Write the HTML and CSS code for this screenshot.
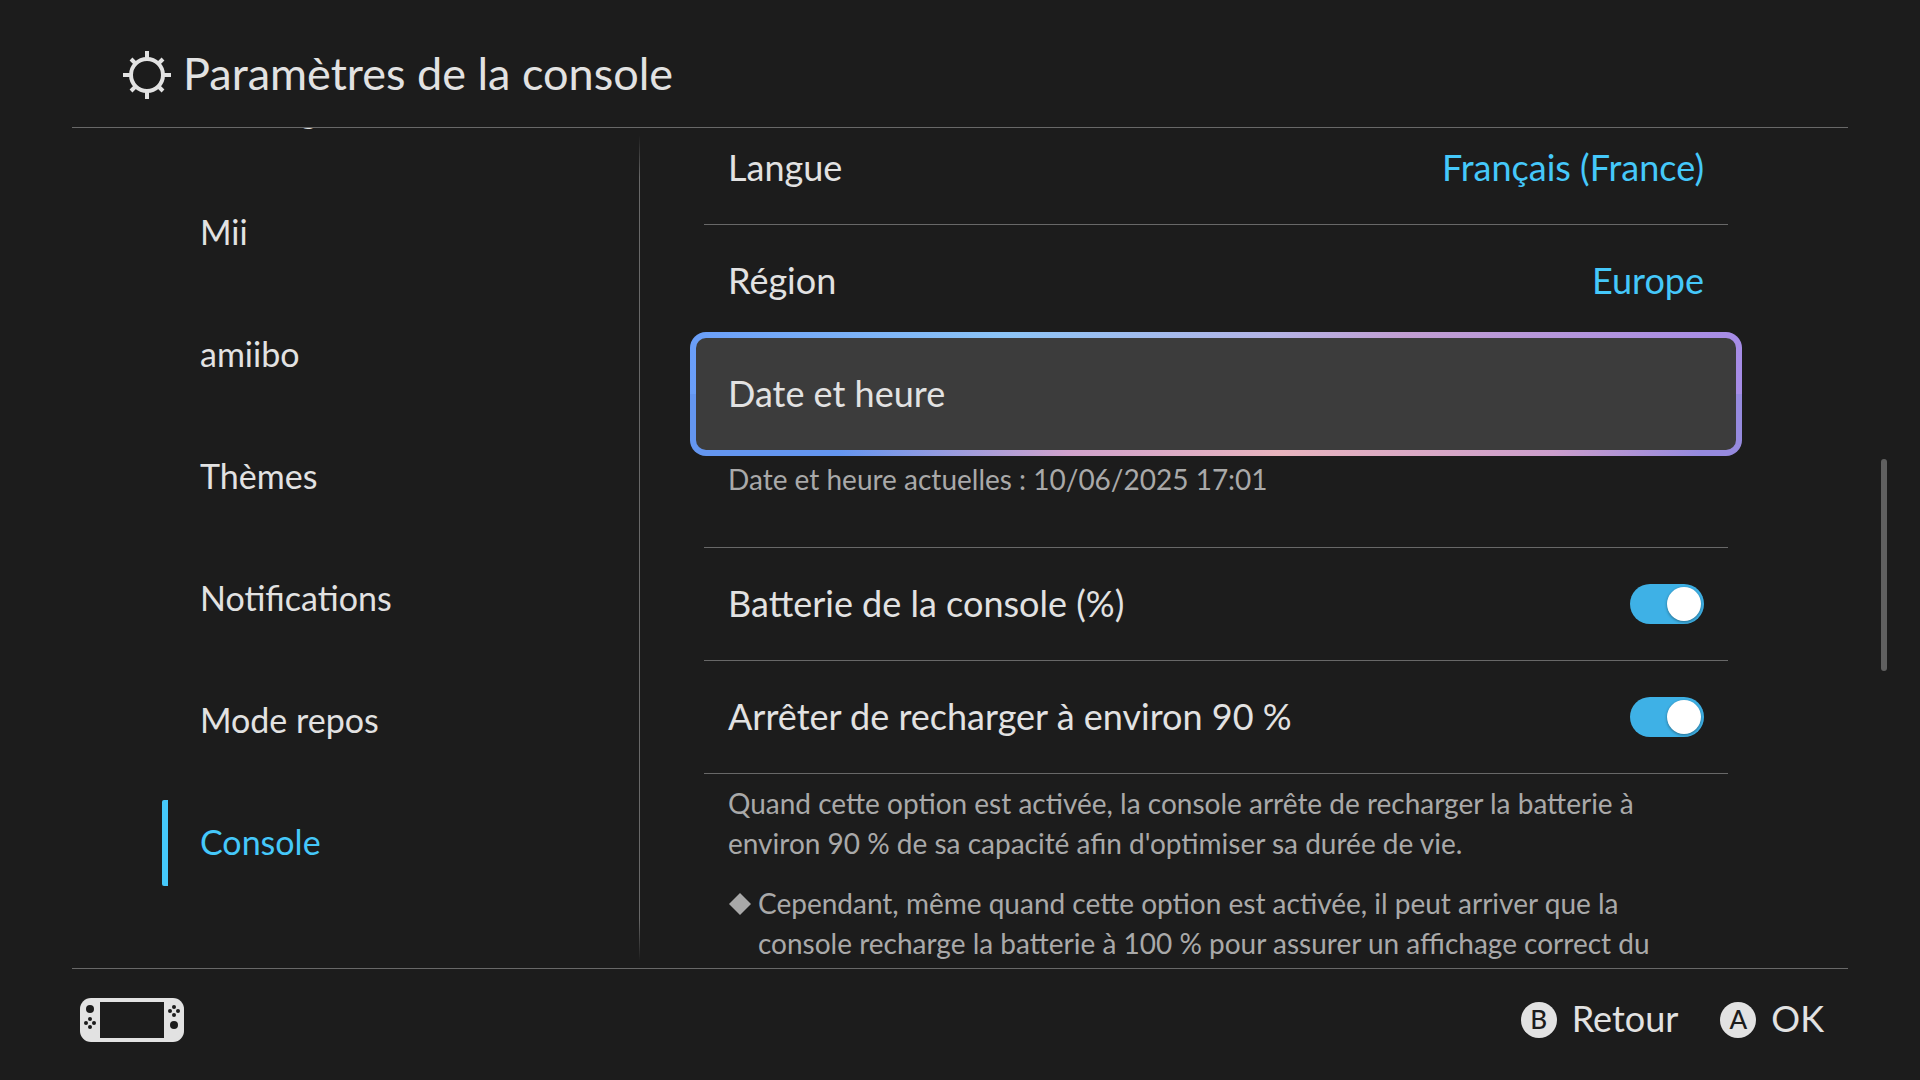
FILE: index.html
```html
<!DOCTYPE html>
<html lang="fr">
<head>
    <meta charset="UTF-8">
    <meta name="viewport" content="width=device-width, initial-scale=1.0">
    <title>Paramètres de la console</title>
    <link rel="stylesheet" href="styles.css">
</head>
<body>
    <header class="top-bar">
        <svg class="gear-icon" viewBox="0 0 48 48" aria-hidden="true">
            <circle cx="24" cy="24" r="16"/>
            <path d="M24 0v8M24 40v8M0 24h8M40 24h8M8 8l5 5M40 8l-5 5M8 40l5-5M40 40l-5-5"/>
        </svg>
        <h1>Paramètres de la console</h1>
    </header>

    <main class="settings">
        <nav class="menu">
            <a class="menu-item" href="#">Stockage</a>
            <a class="menu-item" href="#">Mii</a>
            <a class="menu-item" href="#">amiibo</a>
            <a class="menu-item" href="#">Thèmes</a>
            <a class="menu-item" href="#">Notifications</a>
            <a class="menu-item" href="#">Mode repos</a>
            <a class="menu-item active" href="#">Console</a>
        </nav>

        <section class="panel">
            <div class="panel-list">
                <button class="row">Langue <span class="value">Français (France)</span></button>
                <button class="row no-line">Région <span class="value">Europe</span></button>
                <button class="row no-line focused">Date et heure</button>
                <p class="note current-date">Date et heure actuelles : 10/06/2025 17:01</p>
                <div class="row">
                    <label for="battery">Batterie de la console (%)</label>
                    <input class="toggle" type="checkbox" id="battery" checked>
                </div>
                <div class="row">
                    <label for="charge-limit">Arrêter de recharger à environ 90 %</label>
                    <input class="toggle" type="checkbox" id="charge-limit" checked>
                </div>
                <p class="note">Quand cette option est activée, la console arrête de recharger la batterie à<br>environ 90 % de sa capacité afin d'optimiser sa durée de vie.</p>
                <p class="note warning">
                    <svg class="diamond" viewBox="0 0 20 20" aria-hidden="true"><path d="M10 0l10 10-10 10L0 10z"/></svg>
                    <span>Cependant, même quand cette option est activée, il peut arriver que la<br>console recharge la batterie à 100 % pour assurer un affichage correct du</span>
                </p>
            </div>
        </section>
        <div class="scroll-thumb"></div>
    </main>

    <footer class="bottom-bar">
        <svg class="console-icon" viewBox="0 0 104 44" aria-hidden="true">
            <rect class="shell" width="104" height="44" rx="11"/>
            <rect x="20" y="4" width="64" height="36"/>
            <circle cx="10" cy="11" r="4"/>
            <circle cx="10" cy="21" r="2"/>
            <circle cx="6" cy="25" r="2"/>
            <circle cx="14" cy="25" r="2"/>
            <circle cx="10" cy="29" r="2"/>
            <circle cx="94" cy="9" r="2"/>
            <circle cx="90" cy="13" r="2"/>
            <circle cx="98" cy="13" r="2"/>
            <circle cx="94" cy="17" r="2"/>
            <circle cx="94" cy="27" r="4"/>
        </svg>
        <div class="actions">
            <button class="action"><span class="key">B</span><span class="action-name">Retour</span></button>
            <button class="action"><span class="key">A</span><span class="action-name">OK</span></button>
        </div>
    </footer>
</body>
</html>
```

FILE: styles.css
```css
:root {
    --bg-color: #1c1c1c;
    --text-color: #e2e2e2;
    --muted-color: #a9a9a9;
    --line-color: #686868;
    --accent-color: #45c8fa;
    --toggle-color: #3eb1e6;
}

* {
    box-sizing: border-box;
    margin: 0;
    padding: 0;
}

body {
    display: flex;
    flex-direction: column;
    height: 100vh;
    padding: 0 72px;
    overflow: hidden;
    background: var(--bg-color);
    color: var(--text-color);
    font-family: Lato, "Noto Sans", sans-serif;
    font-size: 36px;
}

button {
    border: none;
    background: none;
    color: inherit;
    font: inherit;
    text-align: left;
    cursor: pointer;
}

.top-bar {
    display: flex;
    align-items: center;
    gap: 12px;
    height: 128px;
    padding: 22px 51px 0;
    border-bottom: 1px solid var(--line-color);
}

h1 {
    padding-bottom: 4px;
    font-size: 45px;
    font-weight: 400;
}

.gear-icon {
    width: 48px;
    height: 48px;
    fill: none;
    stroke: var(--text-color);
    stroke-width: 4;
}

.settings {
    position: relative;
    display: flex;
    flex: 1;
    min-height: 0;
}

.menu {
    display: flex;
    flex-direction: column;
    gap: 36px;
    width: 568px;
    overflow: hidden;
    border-right: 1px solid;
    border-image: linear-gradient(transparent 1%, var(--line-color) 6%, var(--line-color) 94%, transparent 99%) 1;
}

.menu-item {
    display: flex;
    flex-shrink: 0;
    align-items: center;
    height: 86px;
    margin-left: 90px;
    padding: 0 0 4px 32px;
    border-left: 6px solid transparent;
    color: inherit;
    font-size: 34px;
    text-decoration: none;
}

/* list is scrolled down a little */
.menu-item:first-child {
    margin-top: -60px;
}

.menu-item.active {
    border-radius: 2px;
    border-color: var(--accent-color);
    color: var(--accent-color);
}

.panel {
    flex: 1;
    padding: 0 120px 0 64px;
    overflow: hidden;
}

.panel-list {
    margin-top: -16px;
}

.row {
    display: flex;
    align-items: center;
    justify-content: space-between;
    width: 100%;
    height: 113px;
    padding: 0 24px 3px;
    border-bottom: 1px solid var(--line-color);
}

.row.no-line {
    border-bottom: none;
}

.row.focused {
    width: calc(100% + 28px);
    height: 124px;
    margin: -6px -14px;
    padding: 0 32px 3px;
    border: 6px solid transparent;
    border-radius: 16px;
    background:
        linear-gradient(#3c3c3c, #3c3c3c) padding-box,
        linear-gradient(90deg, #6a9ef8, #8cc4f6 30%, #b4b4e6 55%, #c29ed2 68%, #a68ce6) top / 100% 50% no-repeat border-box,
        linear-gradient(90deg, #6496f0 14%, #d0a2cc 36%, #e8b4be 56%, #cc9ecc 82%, #968ade 96%) bottom / 100% 50% no-repeat border-box;
}

.value {
    color: var(--accent-color);
}

.note {
    padding: 0 24px;
    color: var(--muted-color);
    font-size: 28px;
    line-height: 40px;
    white-space: nowrap;
}

.row + .note {
    padding-top: 9px;
}

.note.current-date {
    height: 98px;
    border-bottom: 1px solid var(--line-color);
}

.warning {
    display: flex;
    gap: 6px;
    margin-top: 20px;
}

.diamond {
    flex-shrink: 0;
    width: 24px;
    height: 22px;
    margin-top: 10px;
    fill: var(--muted-color);
}

.toggle {
    display: flex;
    justify-content: flex-end;
    width: 74px;
    height: 40px;
    margin-top: 3px;
    padding: 3px;
    border-radius: 20px;
    background: var(--toggle-color);
    appearance: none;
}

.toggle::before {
    content: "";
    width: 34px;
    height: 34px;
    border-radius: 50%;
    background: #fff;
    box-shadow: 0 1px 3px rgba(0, 0, 0, 0.4);
}

.toggle:not(:checked) {
    justify-content: flex-start;
    background: var(--line-color);
}

.scroll-thumb {
    position: absolute;
    top: 331px;
    right: -39px;
    width: 6px;
    height: 212px;
    border-radius: 3px;
    background: #606060;
}

.bottom-bar {
    display: flex;
    align-items: center;
    justify-content: space-between;
    height: 112px;
    padding: 0 24px 10px 8px;
    border-top: 1px solid var(--line-color);
}

.console-icon {
    width: 104px;
    height: 44px;
    fill: var(--bg-color);
}

.console-icon .shell {
    fill: var(--text-color);
}

.actions {
    display: flex;
    gap: 42px;
}

.action {
    display: flex;
    align-items: center;
    gap: 15px;
}

.action-name {
    padding-bottom: 3px;
}

.key {
    display: flex;
    align-items: center;
    justify-content: center;
    width: 36px;
    height: 36px;
    padding-bottom: 2px;
    border-radius: 50%;
    background: var(--text-color);
    color: var(--bg-color);
    font-size: 26px;
    font-weight: 500;
}
```
